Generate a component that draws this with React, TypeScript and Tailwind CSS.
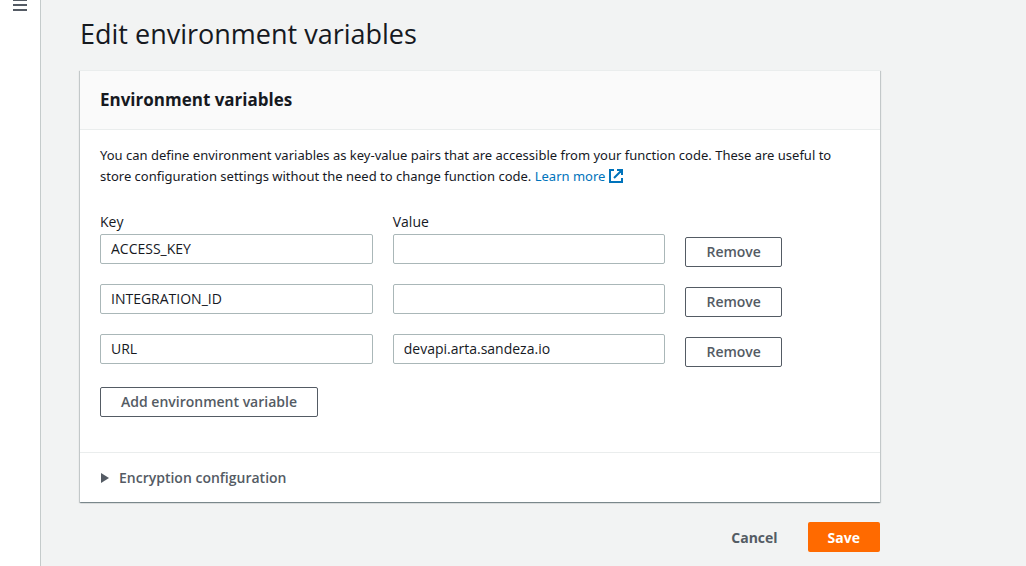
import React, { useState } from "react";

type Variable = { id: number; key: string; value: string };

const initialVariables: Variable[] = [
  { id: 1, key: "ACCESS_KEY", value: "" },
  { id: 2, key: "INTEGRATION_ID", value: "" },
  { id: 3, key: "URL", value: "devapi.arta.sandeza.io" },
];

const inputClass =
  "h-[30px] w-full min-w-0 rounded-xs border border-[#aab7b8] bg-white px-2.5 pb-0.5 text-sm text-[#16191f] outline-none focus:border-[#00a1c9]";

const outlineButton =
  "h-[30px] rounded-xs border border-[#545b64] bg-white px-5 text-sm font-semibold text-[#545b64] hover:bg-[#fafafa]";

function MenuIcon() {
  return (
    <svg width="14" height="11" viewBox="0 0 14 11" fill="#545b64" aria-hidden="true">
      <path d="M0 0h14v1H0zM0 4h14v2H0zM0 9h14v2H0z" />
    </svg>
  );
}

function ExternalIcon() {
  return (
    <svg
      className="ml-1 inline-block align-[-2px]"
      width="14"
      height="14"
      viewBox="0 0 14 14"
      fill="none"
      stroke="currentColor"
      strokeWidth="2"
      aria-hidden="true"
    >
      <path d="M5 1H1v12h12V9M8 1h5v5M13 1L5 9" />
    </svg>
  );
}

export default function App() {
  const [variables, setVariables] = useState(initialVariables);

  const update = (id: number, field: "key" | "value", text: string) =>
    setVariables((list) => list.map((v) => (v.id === id ? { ...v, [field]: text } : v)));

  return (
    <div className="flex min-h-screen bg-[#f2f3f3] font-['Open_Sans','Noto_Sans',sans-serif] text-sm leading-[21px] text-[#16191f]">
      <aside className="w-[41px] shrink-0 border-r border-[#c5cbcb] bg-white">
        <button type="button" aria-label="Open navigation" className="flex w-full justify-center">
          <MenuIcon />
        </button>
      </aside>

      <main className="min-w-0 flex-1 px-[39px] pt-4">
        <form className="max-w-[800px]" onSubmit={(e) => e.preventDefault()}>
          <h1 className="text-[27px] leading-9">Edit environment variables</h1>

          <section className="mt-[18px] bg-white shadow-[0_1px_1px_0_rgba(0,28,36,0.3),1px_1px_1px_0_rgba(0,28,36,0.15),-1px_1px_1px_0_rgba(0,28,36,0.15)]">
            <header className="border-y border-[#eaeded] bg-[#fafafa] px-5 py-[18px]">
              <h2 className="text-[17px] leading-[22px] font-bold">Environment variables</h2>
            </header>

            <div className="px-5 pt-[15px] pb-[35px]">
              <p className="font-['Noto_Sans','Open_Sans',sans-serif] text-[13px]">
                You can define environment variables as key-value pairs that are accessible from your
                function code. These are useful to store configuration settings without the need to
                change function code.{" "}
                <a href="#learn-more" className="text-[#0073bb] hover:underline">
                  Learn more
                  <ExternalIcon />
                </a>
              </p>

              <div className="mt-6 mb-0.5 grid grid-cols-[25fr_25fr_16fr] gap-x-5">
                <span id="key-label">Key</span>
                <span id="value-label">Value</span>
              </div>

              <div className="flex flex-col gap-[17px]">
                {variables.map((v) => (
                  <div key={v.id} className="grid h-[33px] grid-cols-[25fr_25fr_16fr] gap-x-5">
                    <input
                      type="text"
                      aria-labelledby="key-label"
                      className={inputClass}
                      value={v.key}
                      onChange={(e) => update(v.id, "key", e.target.value)}
                    />
                    <input
                      type="text"
                      aria-labelledby="value-label"
                      className={inputClass}
                      value={v.value}
                      onChange={(e) => update(v.id, "value", e.target.value)}
                    />
                    <div className="flex items-end">
                      <button
                        type="button"
                        className={outlineButton}
                        onClick={() => setVariables((list) => list.filter((o) => o.id !== v.id))}
                      >
                        Remove
                      </button>
                    </div>
                  </div>
                ))}
              </div>

              <button
                type="button"
                className={`mt-5 block ${outlineButton}`}
                onClick={() =>
                  setVariables((list) => [...list, { id: Date.now(), key: "", value: "" }])
                }
              >
                Add environment variable
              </button>
            </div>

            <details className="group border-t border-[#eaeded] px-5 py-3.5">
              <summary className="flex cursor-pointer list-none items-center gap-2.5 font-semibold text-[#545b64]">
                <svg
                  className="group-open:rotate-90"
                  width="9"
                  height="10"
                  viewBox="0 0 9 10"
                  fill="currentColor"
                  aria-hidden="true"
                >
                  <path d="M1 0L9 5L1 10Z" />
                </svg>
                Encryption configuration
              </summary>
            </details>
          </section>

          <div className="mt-5 flex justify-end gap-2.5 pb-3.5">
            <button type="button" className="h-[30px] px-5 font-bold text-[#545b64]">
              Cancel
            </button>
            <button
              type="submit"
              className="h-[30px] rounded-xs bg-[#ff6a00] px-5 font-bold text-white hover:bg-[#eb5f07]"
            >
              Save
            </button>
          </div>
        </form>
      </main>
    </div>
  );
}
